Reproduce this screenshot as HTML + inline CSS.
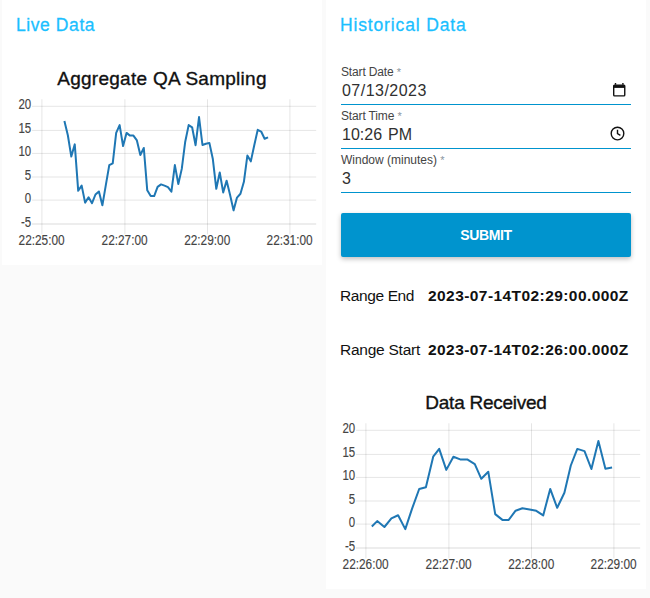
<!DOCTYPE html>
<html lang="en">
<head>
<meta charset="utf-8">
<title>Dashboard</title>
<style>
html,body{margin:0;padding:0;}
body{width:650px;height:598px;background:#fafafa;position:relative;overflow:hidden;
  font-family:"Liberation Sans",sans-serif;color:#111;}
.group{position:absolute;background:#fff;width:320px;top:0;}
#g-live{left:2px;height:265px;}
#g-hist{left:326px;height:589px;}
.group h2{position:absolute;left:14px;top:13px;margin:0;font-weight:normal;font-size:17.5px;line-height:24px;color:#1bbfff;white-space:nowrap;-webkit-text-stroke:0.3px #1bbfff;}
.chart{position:absolute;left:0;width:320px;height:210px;}
.chart .title{position:absolute;left:0;width:320px;text-align:center;top:65.5px;font-size:19px;line-height:26px;color:#111;white-space:nowrap;-webkit-text-stroke:0.35px #111;}
.chart svg{position:absolute;left:-2px;top:0;}
.field{position:absolute;left:15px;width:290px;height:44px;border-bottom:1px solid #0094ce;box-sizing:border-box;}
.field label{position:absolute;left:0;top:4px;font-size:12px;letter-spacing:-0.15px;line-height:14px;color:#444;white-space:nowrap;}
.field label i{font-style:normal;color:#8a959e;font-size:11px;}
.field .val{position:absolute;left:1px;top:20px;font-size:16px;line-height:20px;color:#303030;white-space:nowrap;}
.field svg{position:absolute;}
button{position:absolute;left:15px;top:213px;width:290px;height:44px;border:0;border-radius:2px;background:#0094ce;color:#fff;
  font-family:"Liberation Sans",sans-serif;font-weight:bold;font-size:14px;letter-spacing:-0.4px;padding:0;
  box-shadow:0 2px 5px 0 rgba(0,0,0,.26);}
.row{position:absolute;left:14px;width:292px;height:24px;font-size:15.5px;line-height:24px;white-space:nowrap;}
.row b{position:absolute;left:88px;top:0;font-weight:bold;letter-spacing:0.43px;}
</style>
</head>
<body>
<section class="group" id="g-live">
  <h2 style="letter-spacing:0.58px">Live Data</h2>
  <div class="chart" style="top:0">
    <div class="title" style="letter-spacing:0.27px">Aggregate QA Sampling</div>
    <svg width="324" height="265" viewBox="0 0 324 265">
<g stroke="#000" stroke-opacity="0.1" stroke-width="1" shape-rendering="auto">
<line x1="41.9" y1="99.3" x2="41.9" y2="234.4"/>
<line x1="124.9" y1="99.3" x2="124.9" y2="234.4"/>
<line x1="207.5" y1="99.3" x2="207.5" y2="234.4"/>
<line x1="289.9" y1="99.3" x2="289.9" y2="234.4"/>
<line x1="32" y1="106.3" x2="316.2" y2="106.3"/>
<line x1="32" y1="130.4" x2="316.2" y2="130.4"/>
<line x1="32" y1="153.4" x2="316.2" y2="153.4"/>
<line x1="32" y1="177.0" x2="316.2" y2="177.0"/>
<line x1="32" y1="200.1" x2="316.2" y2="200.1"/>
<line x1="32" y1="224.0" x2="316.2" y2="224.0" stroke-opacity="0.14"/>
</g>
<g font-family="'Liberation Sans', sans-serif" font-size="15" fill="#444" stroke="#444" stroke-width="0.15">
<text transform="translate(31.2,109.35) scale(0.765,1)" text-anchor="end">20</text>
<text transform="translate(31.2,133.20) scale(0.765,1)" text-anchor="end">15</text>
<text transform="translate(31.2,156.25) scale(0.765,1)" text-anchor="end">10</text>
<text transform="translate(31.2,179.80) scale(0.765,1)" text-anchor="end">5</text>
<text transform="translate(31.2,202.85) scale(0.765,1)" text-anchor="end">0</text>
<text transform="translate(31.2,226.80) scale(0.765,1)" text-anchor="end">-5</text>
<text transform="translate(41.6,245.15) scale(0.78,1)" font-size="15.2" text-anchor="middle">22:25:00</text>
<text transform="translate(124.6,245.15) scale(0.78,1)" font-size="15.2" text-anchor="middle">22:27:00</text>
<text transform="translate(207.2,245.15) scale(0.78,1)" font-size="15.2" text-anchor="middle">22:29:00</text>
<text transform="translate(289.6,245.15) scale(0.78,1)" font-size="15.2" text-anchor="middle">22:31:00</text>
</g>
<polyline fill="none" stroke="#1f77b4" stroke-width="2" stroke-linejoin="round" stroke-linecap="butt" points="64.40,121.05 67.85,135.26 71.30,156.60 74.76,144.35 78.21,190.81 81.66,185.63 85.11,202.65 88.56,197.30 92.02,203.20 95.47,194.50 98.92,191.45 102.37,205.30 105.82,185.10 109.28,165.20 112.73,163.40 116.18,132.90 119.63,125.10 123.08,146.10 126.54,132.90 129.99,135.60 133.44,135.60 136.89,140.40 140.34,155.00 143.80,148.00 147.25,190.30 150.70,196.10 154.15,196.10 157.60,186.90 161.06,184.40 164.51,185.60 167.96,187.05 171.41,191.65 174.86,165.10 178.32,184.00 181.77,168.90 185.22,141.70 188.67,125.10 192.12,127.30 195.58,145.20 199.03,117.10 202.48,145.00 205.93,143.80 209.38,142.90 212.84,159.07 216.29,188.80 219.74,172.54 223.19,192.39 226.64,180.65 230.10,195.00 233.55,210.38 237.00,197.61 240.45,193.79 243.90,181.81 247.36,155.58 250.81,161.36 254.26,145.23 257.71,129.85 261.16,131.53 264.62,138.71 268.07,137.31"/>
    </svg>
  </div>
</section>
<section class="group" id="g-hist">
  <h2 style="letter-spacing:0.85px">Historical Data</h2>
  <div class="field" style="top:61px">
    <label>Start Date <i>*</i></label>
    <div class="val" id="v-date" style="letter-spacing:0.47px">07/13/2023</div>
    <svg style="left:0;top:0" width="290" height="44" viewBox="0 0 290 44"><path d="M274.5 21.9v1.8M281.9 21.9v1.8" stroke="#111" stroke-width="1.4" fill="none"/><rect x="272.7" y="24.1" width="11.05" height="10.75" rx="0.8" fill="none" stroke="#111" stroke-width="1.4"/><rect x="272.7" y="24.1" width="11.05" height="2.8" fill="#111"/></svg>
  </div>
  <div class="field" style="top:105px">
    <label>Start Time <i>*</i></label>
    <div class="val" id="v-time" style="letter-spacing:0px;word-spacing:1.5px">10:26 PM</div>
    <svg style="left:0;top:0" width="290" height="44" viewBox="0 0 290 44"><circle cx="276.5" cy="28.55" r="6.3" fill="none" stroke="#111" stroke-width="1.4"/><path d="M276.5 24.7V28.7L279.4 30.3" fill="none" stroke="#111" stroke-width="1.4"/></svg>
  </div>
  <div class="field" style="top:149px">
    <label style="letter-spacing:0px">Window (minutes) <i>*</i></label>
    <div class="val">3</div>
  </div>
  <button type="button">SUBMIT</button>
  <div class="row" style="top:284px;letter-spacing:-0.39px">Range End <b>2023-07-14T02:29:00.000Z</b></div>
  <div class="row" style="top:338px;letter-spacing:-0.25px">Range Start <b>2023-07-14T02:26:00.000Z</b></div>
  <div class="chart" style="top:324px">
    <div class="title" style="letter-spacing:-0.25px">Data Received</div>
    <svg width="324" height="265" viewBox="0 0 324 265">
<g stroke="#000" stroke-opacity="0.1" stroke-width="1" shape-rendering="auto">
<line x1="41.9" y1="99.3" x2="41.9" y2="234.4"/>
<line x1="124.9" y1="99.3" x2="124.9" y2="234.4"/>
<line x1="207.5" y1="99.3" x2="207.5" y2="234.4"/>
<line x1="289.9" y1="99.3" x2="289.9" y2="234.4"/>
<line x1="32" y1="106.3" x2="316.2" y2="106.3"/>
<line x1="32" y1="130.4" x2="316.2" y2="130.4"/>
<line x1="32" y1="153.4" x2="316.2" y2="153.4"/>
<line x1="32" y1="177.0" x2="316.2" y2="177.0"/>
<line x1="32" y1="200.1" x2="316.2" y2="200.1"/>
<line x1="32" y1="224.0" x2="316.2" y2="224.0" stroke-opacity="0.14"/>
</g>
<g font-family="'Liberation Sans', sans-serif" font-size="15" fill="#444" stroke="#444" stroke-width="0.15">
<text transform="translate(31.2,109.35) scale(0.765,1)" text-anchor="end">20</text>
<text transform="translate(31.2,133.20) scale(0.765,1)" text-anchor="end">15</text>
<text transform="translate(31.2,156.25) scale(0.765,1)" text-anchor="end">10</text>
<text transform="translate(31.2,179.80) scale(0.765,1)" text-anchor="end">5</text>
<text transform="translate(31.2,202.85) scale(0.765,1)" text-anchor="end">0</text>
<text transform="translate(31.2,226.80) scale(0.765,1)" text-anchor="end">-5</text>
<text transform="translate(41.6,245.15) scale(0.78,1)" font-size="15.2" text-anchor="middle">22:26:00</text>
<text transform="translate(124.6,245.15) scale(0.78,1)" font-size="15.2" text-anchor="middle">22:27:00</text>
<text transform="translate(207.2,245.15) scale(0.78,1)" font-size="15.2" text-anchor="middle">22:28:00</text>
<text transform="translate(289.6,245.15) scale(0.78,1)" font-size="15.2" text-anchor="middle">22:29:00</text>
</g>
<polyline fill="none" stroke="#1f77b4" stroke-width="2" stroke-linejoin="round" stroke-linecap="butt" points="47.85,202.45 53.20,197.10 60.40,203.00 67.40,194.30 74.10,191.25 81.30,205.10 88.00,184.90 95.20,165.00 101.90,163.20 109.20,132.70 115.20,124.90 122.30,145.90 129.40,132.70 136.20,135.40 143.20,135.40 150.80,140.20 157.30,154.80 164.30,147.80 171.20,190.10 178.40,195.90 184.70,195.90 191.60,186.70 198.40,184.20 205.60,185.40 212.30,186.85 219.20,191.45 226.20,164.90 233.20,183.80 240.40,168.70 246.80,141.50 253.30,124.90 260.50,127.10 267.40,145.00 274.40,116.90 281.40,144.80 288.10,143.60"/>
    </svg>
  </div>
</section>
</body>
</html>
